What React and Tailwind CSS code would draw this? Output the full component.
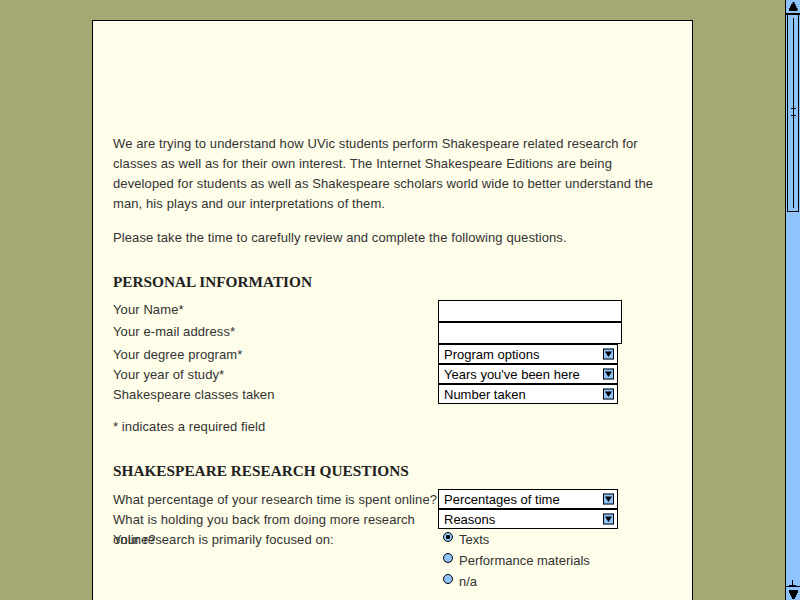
import React from "react";

const body = { fontFamily: '"Liberation Sans", Arial, sans-serif' };
const head = { fontFamily: '"Liberation Serif", "Times New Roman", serif' };

const Arrow = () => (
  <span className="absolute right-[3px] top-1/2 -translate-y-1/2 w-[11px] h-[11px] border border-black bg-[#8ec4fb] flex items-center justify-center">
    <svg width="7" height="7" viewBox="0 0 7 7">
      <path d="M0 1h7L3.5 6.5z" fill="#000" />
    </svg>
  </span>
);

const Select = ({ label }) => (
  <div className="relative w-[180px] h-[20px] border border-black bg-white text-[13px] leading-[19px] pl-[5px] text-black">
    {label}
    <Arrow />
  </div>
);

const TextBox = () => <div className="w-[184px] h-[22px] border border-black bg-white" />;

const Row = ({ label, h, children, nowrap }) => (
  <div className="flex" style={{ height: h }}>
    <div
      className={
        "w-[325px] shrink-0 leading-[20px] text-[13px] text-[#333] tracking-[0.1px] " +
        (nowrap ? "whitespace-nowrap" : "")
      }
      style={{ paddingTop: h === 20 ? 1 : 0 }}
    >
      {label}
    </div>
    <div>{children}</div>
  </div>
);

const Radio = ({ checked, label }) => (
  <div className="flex h-[21px] items-start">
    <span className="mt-[3px] ml-[5px] w-[10px] h-[10px] rounded-full border border-black bg-[#8ec4fb] flex items-center justify-center">
      {checked && <span className="w-[4px] h-[4px] bg-black rounded-[1px]" />}
    </span>
    <span className="ml-[6px] text-[13px] leading-[22px] text-[#333]">{label}</span>
  </div>
);

const Scrollbar = () => (
  <div className="w-[15px] h-[600px] border-l border-black bg-[#8ec4fb] flex flex-col">
    <div className="h-[15px] border-b-2 border-black flex items-start justify-center pt-[2px]">
      <svg width="9" height="9" viewBox="0 0 9 9">
        <path d="M3.5 0h2v2h1v2h1v2h1v3H0V6h1V4h1V2h1.5z" fill="#000" />
      </svg>
    </div>
    <div className="h-[197px] mx-[1px] border border-t-0 border-black rounded-b-[1px] relative">
      <div className="absolute left-[5px] top-[3px] bottom-[3px] w-px bg-black" />
      <div className="absolute left-[3px] top-[93px] w-[5px] h-px bg-black" />
      <div className="absolute left-[3px] top-[100px] w-[5px] h-px bg-black" />
    </div>
    <div className="flex-1 relative">
      <div className="absolute left-[6px] bottom-[1px] w-px h-[5px] bg-black" />
      <div className="absolute left-[3px] bottom-0 w-[7px] h-px bg-black" />
    </div>
    <div className="h-[14px] border-t border-black flex items-center justify-center">
      <svg width="9" height="10" viewBox="0 0 9 10">
        <path d="M0 1h9v3H8v2H7v2H6v2H3V8H2V6H1V4H0z" fill="#000" />
      </svg>
    </div>
  </div>
);

export default function App() {
  return (
    <div className="w-[800px] h-[600px] overflow-hidden bg-[#a6a873] flex" style={body}>
      <div className="w-[785px] h-[600px] overflow-hidden pl-[92px] pt-[20px]">
        <div className="w-[601px] h-[700px] border border-black bg-[#fefde9] px-[20px] pt-[113px] text-[#333]">
          <p className="text-[13px] leading-[20px] w-[545px] tracking-[0.1px]">
            We are trying to understand how UVic students perform Shakespeare related research for
            classes as well as for their own interest. The Internet Shakespeare Editions are being
            developed for students as well as Shakespeare scholars world wide to better understand the
            man, his plays and our interpretations of them.
          </p>
          <p className="text-[13px] leading-[20px] mt-[14px] tracking-[0.1px]">
            Please take the time to carefully review and complete the following questions.
          </p>

          <h2 className="mt-[24px] text-[15.3px] leading-[20px] font-bold text-[#222]" style={head}>
            PERSONAL INFORMATION
          </h2>
          <div className="mt-[8px]">
            <Row label="Your Name*" h={22}>
              <TextBox />
            </Row>
            <Row label="Your e-mail address*" h={22}>
              <TextBox />
            </Row>
            <Row label="Your degree program*" h={20}>
              <Select label="Program options" />
            </Row>
            <Row label="Your year of study*" h={20}>
              <Select label="Years you've been here" />
            </Row>
            <Row label="Shakespeare classes taken" h={20}>
              <Select label="Number taken" />
            </Row>
          </div>
          <p className="mt-[13px] text-[13px] leading-[20px] tracking-[0.1px]">* indicates a required field</p>

          <h2 className="mt-[24px] text-[15.3px] leading-[20px] font-bold text-[#222]" style={head}>
            SHAKESPEARE RESEARCH QUESTIONS
          </h2>
          <div className="mt-[8px]">
            <Row label="What percentage of your research time is spent online?" h={20} nowrap>
              <Select label="Percentages of time" />
            </Row>
            <Row label="What is holding you back from doing more research online?" h={20}>
              <Select label="Reasons" />
            </Row>
            <div className="flex">
              <div className="w-[325px] shrink-0 h-[20px] pt-[1px] leading-[20px] text-[13px] text-[#333] tracking-[0.1px]">
                Your research is primarily focused on:
              </div>
              <div>
                <Radio checked label="Texts" />
                <Radio label="Performance materials" />
                <Radio label="n/a" />
              </div>
            </div>
          </div>
        </div>
      </div>
      <Scrollbar />
    </div>
  );
}
